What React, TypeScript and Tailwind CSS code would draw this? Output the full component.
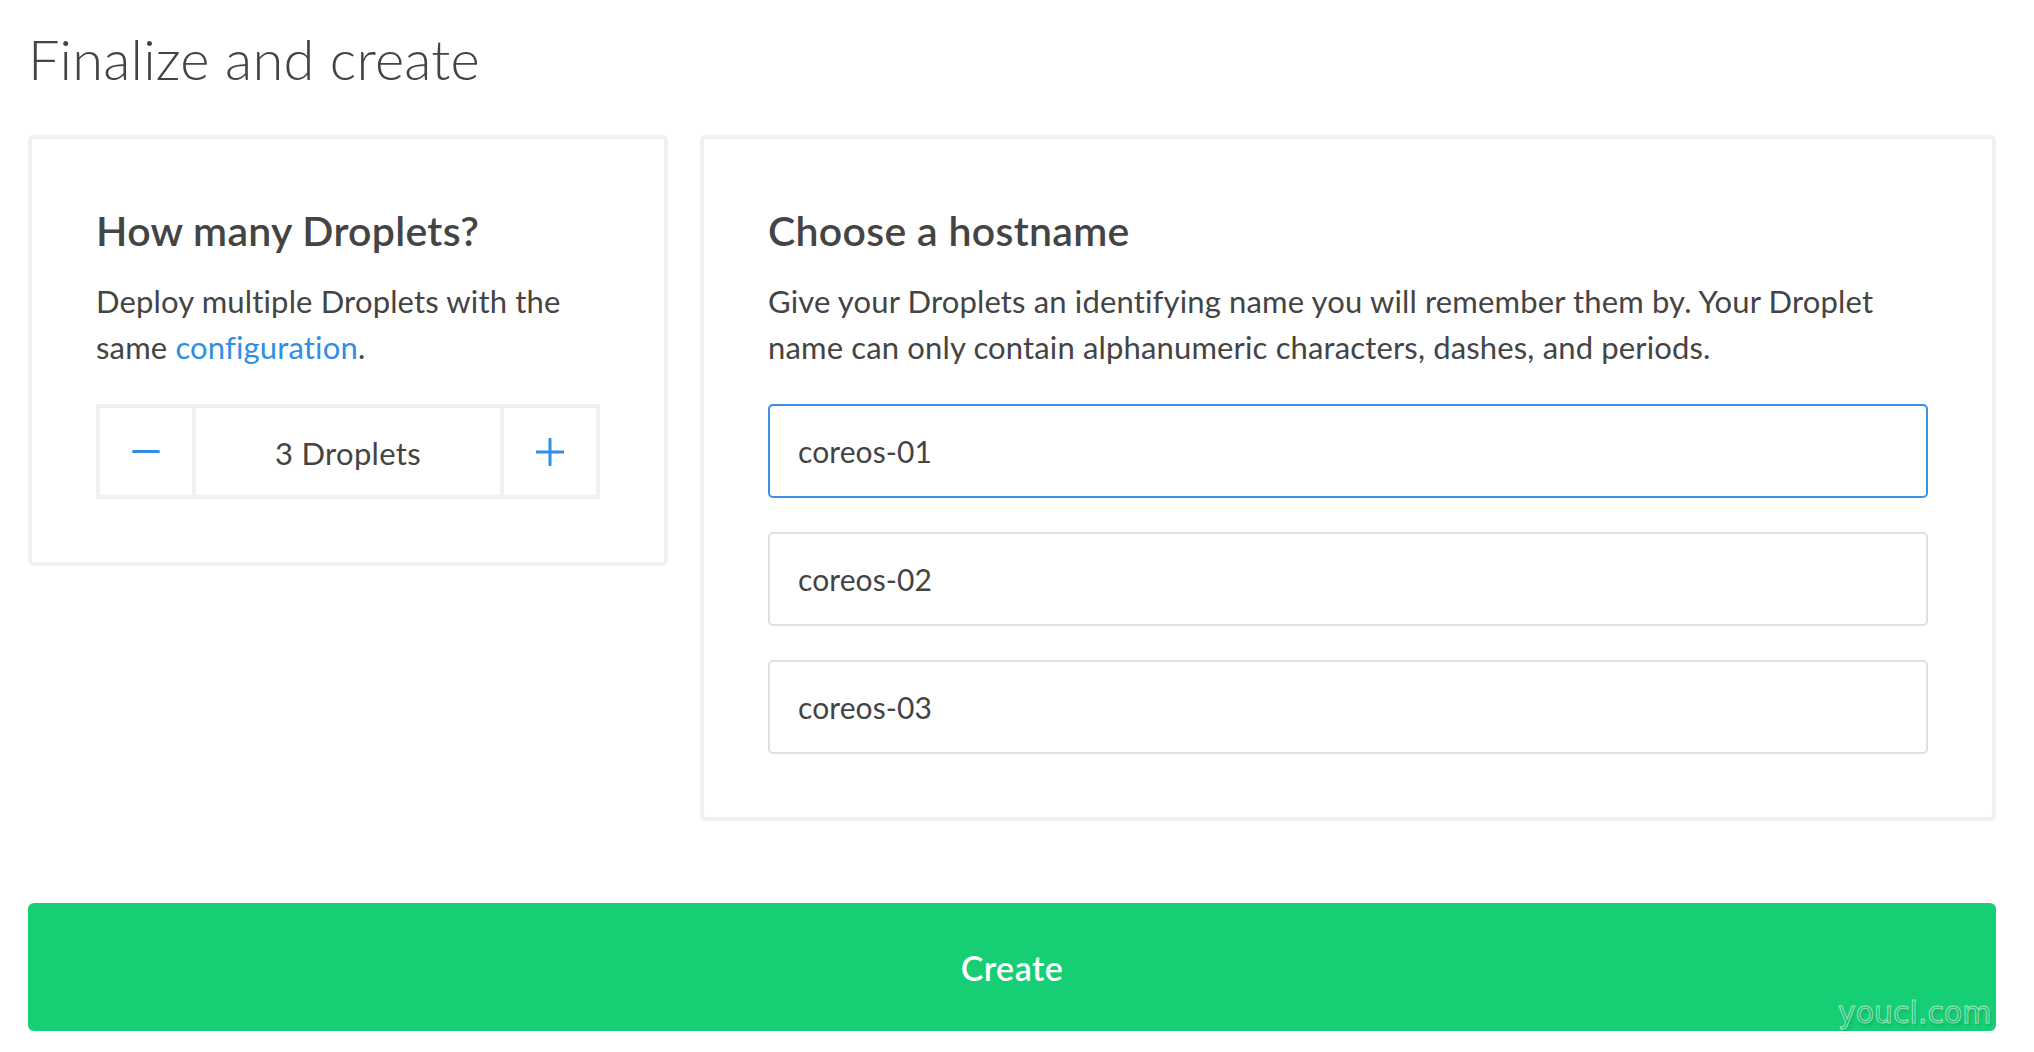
import React from "react";

export default function App() {
  const inputs = ["coreos-01", "coreos-02", "coreos-03"];
  return (
    <div className="relative min-h-screen bg-white font-['Lato','Open_Sans',sans-serif] text-[#444444]">
      <div className="pl-[28px] pr-[38px] pt-[32px]">
        <h1 className="text-[56px] font-light leading-[54px] tracking-[0.2px]">Finalize and create</h1>

        <div className="mt-[49px] flex items-start gap-[32px]">
          {/* Left card */}
          <div className="w-[640px] rounded-[6px] border-4 border-[#f0f0f0] px-[64px] pt-[68px] pb-[63px]">
            <h2 className="text-[41px] font-semibold leading-[48px] tracking-[0.3px]">How many Droplets?</h2>
            <p className="mt-[23px] text-[31px] leading-[46px] tracking-[0.15px]">
              Deploy multiple Droplets with the same <span className="text-[#2f8ee6]">configuration</span>.
            </p>
            <div className="mt-[34px] flex h-[95px] w-[504px] border-4 border-[#f0f0f0]">
              <div className="flex w-[96px] items-center justify-center border-r-4 border-[#f0f0f0]">
                <div className="h-[3px] w-[28px] rounded-full bg-[#2f8ee6]" />
              </div>
              <div className="flex flex-1 items-center justify-center border-r-4 border-[#f0f0f0] pt-[3px] text-[31px] tracking-[0.3px]">
                3 Droplets
              </div>
              <div className="flex w-[92px] items-center justify-center">
                <svg width="28" height="28" viewBox="0 0 28 28">
                  <path d="M14 1v26M1 14h26" stroke="#2f8ee6" strokeWidth="3" strokeLinecap="round" />
                </svg>
              </div>
            </div>
          </div>

          {/* Right card */}
          <div className="flex-1 rounded-[6px] border-4 border-[#f0f0f0] px-[64px] pt-[68px] pb-[63px]">
            <h2 className="text-[41px] font-semibold leading-[48px] tracking-[0.3px]">Choose a hostname</h2>
            <p className="mt-[23px] text-[31px] leading-[46px] tracking-[0.15px]">
              Give your Droplets an identifying name you will remember them by. Your Droplet name can only contain
              alphanumeric characters, dashes, and periods.
            </p>
            <div className="mt-[34px] flex flex-col gap-[34px]">
              {inputs.map((v, i) => (
                <div
                  key={v}
                  className={
                    i === 0
                      ? "flex h-[94px] items-center rounded-[5px] border-2 border-[#3990e8] pl-[28px] text-[30px] tracking-[0.1px]"
                      : "flex h-[94px] items-center rounded-[5px] border-2 border-[#e0e0e0] pl-[28px] text-[30px] tracking-[0.1px]"
                  }
                >
                  {v}
                </div>
              ))}
            </div>
          </div>
        </div>

        <button className="mt-[82px] flex h-[128px] w-full items-center justify-center rounded-[6px] bg-[#16ce74] text-[34px] font-semibold tracking-[0.5px] text-white">
          Create
        </button>
      </div>

      <div className="pointer-events-none absolute left-[1838px] top-[990px] font-['DejaVu_Sans',sans-serif] text-[30px] text-transparent [-webkit-text-stroke:1px_rgba(255,255,255,0.55)] [text-shadow:2px_3px_3px_rgba(0,0,0,0.12)]">
        youcl.com
      </div>
    </div>
  );
}
